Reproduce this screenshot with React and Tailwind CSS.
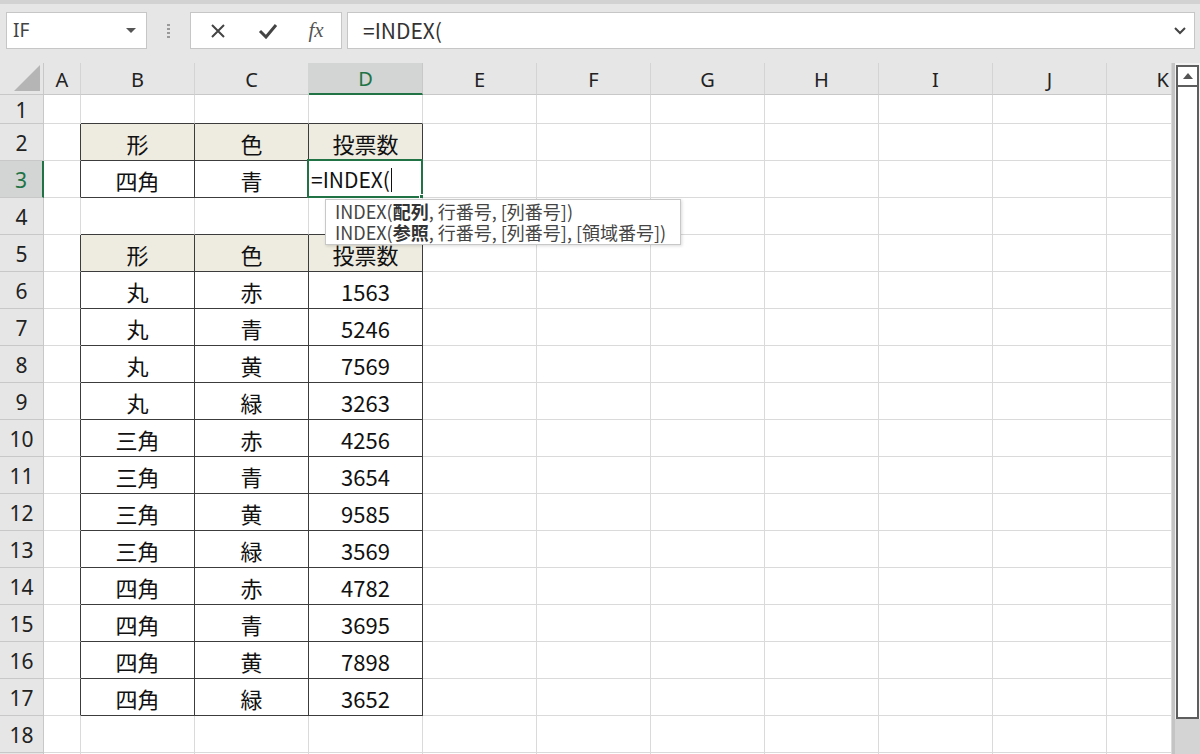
import React from "react";

const COLS = ["A", "B", "C", "D", "E", "F", "G", "H", "I", "J", "K"];
const COL_W = [37, 114, 114, 114, 114, 114, 114, 114, 114, 114, 65];
const ROW_H = [29, 37, 37, 37, 37, 37, 37, 37, 37, 37, 37, 37, 37, 37, 37, 37, 37, 37, 37];

const data = {
    2: ["形", "色", "投票数"],
    3: ["四角", "青", ""],
    5: ["形", "色", "投票数"],
    6: ["丸", "赤", "1563"],
    7: ["丸", "青", "5246"],
    8: ["丸", "黄", "7569"],
    9: ["丸", "緑", "3263"],
    10: ["三角", "赤", "4256"],
    11: ["三角", "青", "3654"],
    12: ["三角", "黄", "9585"],
    13: ["三角", "緑", "3569"],
    14: ["四角", "赤", "4782"],
    15: ["四角", "青", "3695"],
    16: ["四角", "黄", "7898"],
    17: ["四角", "緑", "3652"],
};

const inTable = (r, c) => c >= 1 && c <= 3 && ((r >= 2 && r <= 3) || (r >= 5 && r <= 17));
const isHead = (r) => r === 2 || r === 5;

const cellFont = { fontFamily: '"Noto Sans CJK JP", "Noto Sans", sans-serif' };
const uiFont = { fontFamily: '"Noto Sans", "Liberation Sans", sans-serif' };

function Toolbar() {
    return (
        <div className="h-[63px] bg-[#e6e6e6] border-t-[4px] border-[#d2d2d2] flex items-start pt-[8px]">
            <div className="ml-[6px] w-[141px] h-[37px] bg-white border border-[#c6c6c6] flex items-center justify-between pl-[6px] pr-[10px]">
                <span className="text-[19px] text-[#444]" style={uiFont}>IF</span>
                <svg width="10" height="6" viewBox="0 0 10 6"><polygon points="0,0 10,0 5,5" fill="#555" /></svg>
            </div>
            <div className="w-[43px] h-[37px] flex flex-col items-center justify-center gap-[2px]">
                <span className="w-[3px] h-[2px] bg-[#999]"></span>
                <span className="w-[3px] h-[2px] bg-[#999]"></span>
                <span className="w-[3px] h-[2px] bg-[#999]"></span>
                <span className="w-[3px] h-[2px] bg-[#999]"></span>
            </div>
            <div className="w-[152px] h-[37px] bg-white border border-[#c6c6c6] flex items-center">
                <div className="w-[54px] flex justify-center">
                    <svg width="16" height="16" viewBox="0 0 16 16"><path d="M2 2 L14 14 M14 2 L2 14" stroke="#444" strokeWidth="2" /></svg>
                </div>
                <div className="w-[46px] flex justify-center">
                    <svg width="20" height="16" viewBox="0 0 20 16"><path d="M2 8 L8 14 L18 2" stroke="#444" strokeWidth="3" fill="none" /></svg>
                </div>
                <div className="w-[50px] flex justify-center">
                    <span className="italic text-[21px] text-[#555]" style={{ fontFamily: '"Liberation Serif", serif' }}>fx</span>
                </div>
            </div>
            <div className="ml-[5px] w-[848px] h-[37px] bg-white border border-[#c6c6c6] flex items-center justify-between pl-[15px] pr-[8px]">
                <span className="text-[21px] text-[#333]" style={cellFont}>=INDEX(</span>
                <svg width="12" height="8" viewBox="0 0 12 8"><path d="M1 1 L6 6 L11 1" stroke="#444" strokeWidth="2" fill="none" /></svg>
            </div>
        </div>
    );
}

function Sheet() {
    return (
        <div className="relative flex-1">
            {/* column header */}
            <div className="flex h-[32px]">
                <div className="w-[44px] h-full bg-[#e6e6e6] border-r border-b border-[#c8c8c8] relative">
                    <svg className="absolute right-[3px] bottom-[3px]" width="26" height="26" viewBox="0 0 26 26"><polygon points="26,0 26,26 0,26" fill="#b5b5b5" /></svg>
                </div>
                {COLS.map((c, i) => (
                    <div key={c} style={{ width: COL_W[i], ...uiFont }}
                        className={i === 3
                            ? "h-full pt-[2px] bg-[#d2d5d3] border-r border-[#c8c8c8] border-b-2 border-b-[#217346] flex items-center justify-center text-[20px] text-[#217346]"
                            : "h-full pt-[2px] bg-[#e6e6e6] border-r border-[#d4d4d4] border-b border-b-[#c8c8c8] flex items-center justify-center text-[20px] text-[#222]"}>
                        {i === 10 ? <span className="ml-auto pr-[2px]">{c}</span> : c}
                    </div>
                ))}
            </div>
            {ROW_H.map((h, ri) => {
                const r = ri + 1;
                return (
                    <div key={r} className="flex" style={{ height: h }}>
                        <div className={r === 3
                            ? "w-[44px] h-full pt-[4px] bg-[#d2d5d3] border-r-2 border-r-[#217346] border-b border-b-[#c8c8c8] flex items-center justify-center text-[21px] text-[#217346]"
                            : "w-[44px] h-full pt-[4px] bg-[#e6e6e6] border-r border-b border-[#c8c8c8] flex items-center justify-center text-[21px] text-[#222]"} style={uiFont}>
                            {r}
                        </div>
                        {COLS.map((c, ci) => {
                            const darkR = inTable(r, ci) || inTable(r, ci + 1);
                            const darkB = inTable(r, ci) || inTable(r + 1, ci);
                            const bg = inTable(r, ci) && isHead(r) ? "bg-[#eeebe0]" : "bg-white";
                            const text = data[r] && ci >= 1 && ci <= 3 ? data[r][ci - 1] : "";
                            return (
                                <div key={c} style={{ width: COL_W[ci], ...cellFont }}
                                    className={`relative h-full pt-[2px] border-r border-b ${darkR ? "border-r-[#3c3c3c]" : "border-r-[#dadada]"} ${darkB ? "border-b-[#3c3c3c]" : "border-b-[#dadada]"} ${bg} flex items-center justify-center text-[22px] text-[#111]`}>
                                    {text}
                                    {r === 3 && ci === 3 && (
                                        <div className="absolute -left-[2px] -top-[2px] -right-[1px] -bottom-[1px] border-2 border-[#217346] flex items-center pl-[2px] pt-[3px] text-[21px] text-[#111]">
                                            =INDEX(<span className="w-[1px] h-[24px] bg-[#111] ml-[1px]"></span>
                                            <span className="absolute -right-[3px] -bottom-[3px] w-[5px] h-[5px] bg-[#217346] border border-white"></span>
                                        </div>
                                    )}
                                </div>
                            );
                        })}
                    </div>
                );
            })}
            {/* function tooltip */}
            <div className="absolute left-[325px] top-[136px] w-[356px] h-[46px] bg-white border border-[#c8c8c8] shadow-[1px_1px_3px_rgba(0,0,0,0.15)] pl-[9px] pt-[1px] text-[18px] leading-[21px] text-[#444] whitespace-nowrap" style={cellFont}>
                <div>INDEX(<b className="text-[#333]">配列</b>, 行番号, [列番号])</div>
                <div>INDEX(<b className="text-[#333]">参照</b>, 行番号, [列番号], [領域番号])</div>
            </div>
        </div>
    );
}

function Scrollbar() {
    return (
        <div className="w-[28px] flex flex-col bg-[#d4d4d4] border-l-[3px] border-[#c4c4c4]">
            <div className="bg-[#f2f2f2] pt-[2px] px-[1px]">
                <div className="h-[22px] bg-white border-2 border-[#5e5e5e] flex items-center justify-center">
                    <svg width="10" height="6" viewBox="0 0 10 6"><polygon points="5,0 10,6 0,6" fill="#555" /></svg>
                </div>
                <div className="h-[632px] bg-white border-2 border-t-0 border-[#5e5e5e]"></div>
            </div>
        </div>
    );
}

export default function App() {
    return (
        <div className="w-[1200px] h-[754px] overflow-hidden bg-white flex flex-col">
            <Toolbar />
            <div className="flex flex-1 overflow-hidden">
                <Sheet />
                <Scrollbar />
            </div>
        </div>
    );
}
